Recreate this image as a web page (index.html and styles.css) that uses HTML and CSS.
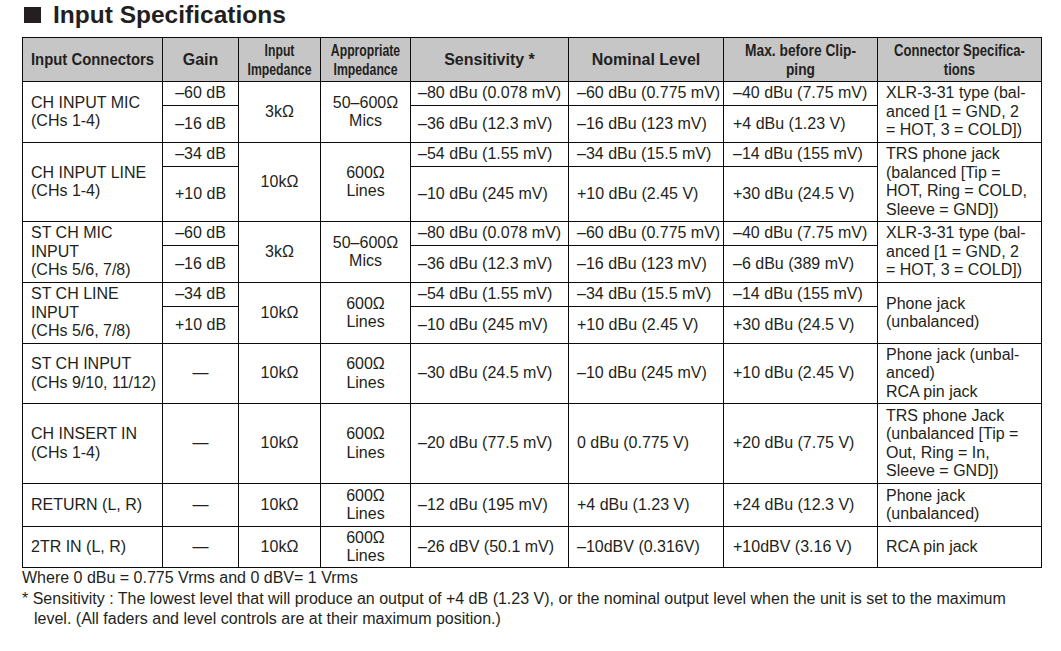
FILE: index.html
```html
<!DOCTYPE html>
<html lang="en">
<head>
<meta charset="utf-8">
<title>Input Specifications</title>
<link rel="stylesheet" href="styles.css">
</head>
<body>
<div class="page">
  <h1 class="title"><span class="mark"></span>Input Specifications</h1>
  <table class="spec">
    <colgroup>
      <col class="w-conn"><col class="w-gain"><col class="w-imp"><col class="w-app">
      <col class="w-sens"><col class="w-nom"><col class="w-max"><col class="w-spec">
    </colgroup>
    <thead>
      <tr class="h-head">
        <th><span class="cond sx93">Input Connectors</span></th>
        <th>Gain</th>
        <th><span class="cond two sx72">Input<br>Impedance</span></th>
        <th><span class="cond two sx72">Appropriate<br>Impedance</span></th>
        <th>Sensitivity *</th>
        <th>Nominal Level</th>
        <th><span class="cond two sx81">Max. before Clip-<br>ping</span></th>
        <th><span class="cond two sx77">Connector Specifica-<br>tions</span></th>
      </tr>
    </thead>
    <tbody>
      <tr class="h24">
        <td rowspan="2" class="l">CH INPUT MIC<br>(CHs 1-4)</td>
        <td class="c">–60 dB</td>
        <td rowspan="2" class="c">3kΩ</td>
        <td rowspan="2" class="c">50–600Ω<br>Mics</td>
        <td class="l s">–80 dBu (0.078 mV)</td>
        <td class="l">–60 dBu (0.775 mV)</td>
        <td class="l m">–40 dBu (7.75 mV)</td>
        <td rowspan="2" class="l">XLR-3-31 type (bal-<br>anced [1 = GND, 2<br>= HOT, 3 = COLD])</td>
      </tr>
      <tr class="h37">
        <td class="c">–16 dB</td>
        <td class="l s">–36 dBu (12.3 mV)</td>
        <td class="l">–16 dBu (123 mV)</td>
        <td class="l m">+4 dBu (1.23 V)</td>
      </tr>

      <tr class="h24">
        <td rowspan="2" class="l">CH INPUT LINE<br>(CHs 1-4)</td>
        <td class="c">–34 dB</td>
        <td rowspan="2" class="c">10kΩ</td>
        <td rowspan="2" class="c">600Ω<br>Lines</td>
        <td class="l s">–54 dBu (1.55 mV)</td>
        <td class="l">–34 dBu (15.5 mV)</td>
        <td class="l m">–14 dBu (155 mV)</td>
        <td rowspan="2" class="l">TRS phone jack<br>(balanced [Tip =<br>HOT, Ring = COLD,<br>Sleeve = GND])</td>
      </tr>
      <tr class="h55">
        <td class="c">+10 dB</td>
        <td class="l s">–10 dBu (245 mV)</td>
        <td class="l">+10 dBu (2.45 V)</td>
        <td class="l m">+30 dBu (24.5 V)</td>
      </tr>

      <tr class="h24">
        <td rowspan="2" class="l">ST CH MIC<br>INPUT<br>(CHs 5/6, 7/8)</td>
        <td class="c">–60 dB</td>
        <td rowspan="2" class="c">3kΩ</td>
        <td rowspan="2" class="c">50–600Ω<br>Mics</td>
        <td class="l s">–80 dBu (0.078 mV)</td>
        <td class="l">–60 dBu (0.775 mV)</td>
        <td class="l m">–40 dBu (7.75 mV)</td>
        <td rowspan="2" class="l">XLR-3-31 type (bal-<br>anced [1 = GND, 2<br>= HOT, 3 = COLD])</td>
      </tr>
      <tr class="h37">
        <td class="c">–16 dB</td>
        <td class="l s">–36 dBu (12.3 mV)</td>
        <td class="l">–16 dBu (123 mV)</td>
        <td class="l m">–6 dBu (389 mV)</td>
      </tr>

      <tr class="h24">
        <td rowspan="2" class="l">ST CH LINE<br>INPUT<br>(CHs 5/6, 7/8)</td>
        <td class="c">–34 dB</td>
        <td rowspan="2" class="c">10kΩ</td>
        <td rowspan="2" class="c">600Ω<br>Lines</td>
        <td class="l s">–54 dBu (1.55 mV)</td>
        <td class="l">–34 dBu (15.5 mV)</td>
        <td class="l m">–14 dBu (155 mV)</td>
        <td rowspan="2" class="l">Phone jack<br>(unbalanced)</td>
      </tr>
      <tr class="h37">
        <td class="c">+10 dB</td>
        <td class="l s">–10 dBu (245 mV)</td>
        <td class="l">+10 dBu (2.45 V)</td>
        <td class="l m">+30 dBu (24.5 V)</td>
      </tr>

      <tr class="h60">
        <td class="l">ST CH INPUT<br>(CHs 9/10, 11/12)</td>
        <td class="c">—</td>
        <td class="c">10kΩ</td>
        <td class="c">600Ω<br>Lines</td>
        <td class="l s">–30 dBu (24.5 mV)</td>
        <td class="l">–10 dBu (245 mV)</td>
        <td class="l m">+10 dBu (2.45 V)</td>
        <td class="l">Phone jack (unbal-<br>anced)<br>RCA pin jack</td>
      </tr>

      <tr class="h80">
        <td class="l">CH INSERT IN<br>(CHs 1-4)</td>
        <td class="c">—</td>
        <td class="c">10kΩ</td>
        <td class="c">600Ω<br>Lines</td>
        <td class="l s">–20 dBu (77.5 mV)</td>
        <td class="l">0 dBu (0.775 V)</td>
        <td class="l m">+20 dBu (7.75 V)</td>
        <td class="l">TRS phone Jack<br>(unbalanced [Tip =<br>Out, Ring = In,<br>Sleeve = GND])</td>
      </tr>

      <tr class="h43">
        <td class="l">RETURN (L, R)</td>
        <td class="c">—</td>
        <td class="c">10kΩ</td>
        <td class="c">600Ω<br>Lines</td>
        <td class="l s">–12 dBu (195 mV)</td>
        <td class="l">+4 dBu (1.23 V)</td>
        <td class="l m">+24 dBu (12.3 V)</td>
        <td class="l">Phone jack<br>(unbalanced)</td>
      </tr>

      <tr class="h41">
        <td class="l">2TR IN (L, R)</td>
        <td class="c">—</td>
        <td class="c">10kΩ</td>
        <td class="c">600Ω<br>Lines</td>
        <td class="l s">–26 dBV (50.1 mV)</td>
        <td class="l">–10dBV (0.316V)</td>
        <td class="l m">+10dBV (3.16 V)</td>
        <td class="l">RCA pin jack</td>
      </tr>
    </tbody>
  </table>
  <div class="notes">
    <p class="note">Where 0 dBu = 0.775 Vrms and 0 dBV= 1 Vrms</p>
    <p class="note hang">* Sensitivity : The lowest level that will produce an output of +4 dB (1.23 V), or the nominal output level when the unit is set to the maximum level. (All faders and level controls are at their maximum position.)</p>
  </div>
</div>
</body>
</html>
```

FILE: styles.css
```css
html, body {
  margin: 0;
  padding: 0;
  background: #ffffff;
}

.page {
  padding: 1px 0 0 22px;
  width: 1019px;
  color: #231f20;
  font-family: "Liberation Sans", Arial, Helvetica, sans-serif;
}

.title {
  margin: 0 0 8px 0;
  display: flex;
  align-items: center;
  gap: 12px;
  font-size: 24.5px;
  line-height: 28px;
  font-weight: bold;
  color: #231f20;
}

.mark {
  display: block;
  width: 17px;
  height: 16px;
  margin-left: 2px;
  background: #231f20;
}

.spec {
  border-collapse: collapse;
  table-layout: fixed;
  width: 1019px;
  font-size: 16px;
  line-height: 18.5px;
  color: #231f20;
}

.w-conn { width: 140px; }
.w-gain { width: 76px; }
.w-imp  { width: 82px; }
.w-app  { width: 90px; }
.w-sens { width: 158px; }
.w-nom  { width: 155px; }
.w-max  { width: 154px; }
.w-spec { width: 164px; }

.spec th,
.spec td {
  border: 1px solid #0c0a0b;
  padding: 0;
  vertical-align: middle;
  white-space: nowrap;
  overflow: hidden;
}

.spec th {
  background: #c6c6c6;
  font-size: 16px;
  line-height: 17px;
  font-weight: bold;
  text-align: center;
}

.cond {
  display: block;
  margin: 0 -30px;
  transform-origin: 50% 50%;
}

.cond.two {
  font-size: 17px;
  line-height: 19px;
}

.sx93 { transform: scaleX(0.93); }
.sx81 { transform: scaleX(0.81); }
.sx77 { transform: scaleX(0.77); }
.sx72 { transform: scaleX(0.72); }

.spec td.l {
  text-align: left;
  padding-left: 8px;
}

.spec td.s {
  padding-left: 7px;
}

.spec td.m {
  padding-left: 9px;
}

.spec td.c {
  text-align: center;
}

.h-head { height: 44px; }
.h24 { height: 24px; }
.h37 { height: 37px; }
.h55 { height: 55px; }
.h60 { height: 60px; }
.h80 { height: 80px; }
.h43 { height: 43px; }
.h41 { height: 41px; }

.notes {
  margin-top: 0;
  font-size: 16px;
  line-height: 20.5px;
}

.note {
  margin: 0;
}

.note.hang {
  padding-left: 12px;
  text-indent: -12px;
}
```
